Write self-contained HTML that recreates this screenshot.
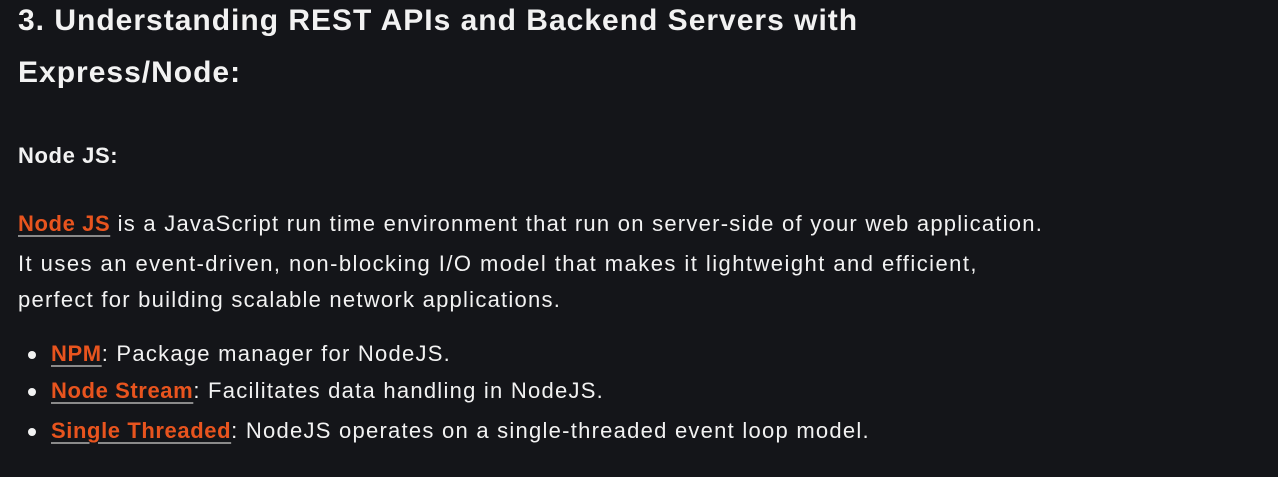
<!DOCTYPE html>
<html><head><style>
html,body{margin:0;padding:0;background:#141519;width:1278px;height:477px;overflow:hidden}
body{font-family:"Liberation Sans",sans-serif;color:#f2f2f2;position:relative}
.a{color:#e8541e;font-weight:bold;letter-spacing:0.6px;text-decoration:underline;text-decoration-color:#8a8a8a;text-underline-offset:4px;text-decoration-thickness:2px}
.l{position:absolute;left:18px;white-space:nowrap}
h1{margin:0;font-size:30px;letter-spacing:1px;font-weight:bold;position:absolute;left:18px;line-height:52px;width:1000px}
.p{font-size:22px;letter-spacing:1.25px}
.b{position:absolute;left:28px;width:8px;height:8px;border-radius:50%;background:#f2f2f2}
</style></head><body>
<h1 style="top:-5px">3. Understanding REST APIs and Backend Servers with<br>Express/Node:</h1>
<div class="l" style="top:143px;font-size:22px;letter-spacing:0.6px;font-weight:bold">Node JS:</div>
<div class="l p" style="top:211px"><span class="a">Node JS</span> is a JavaScript run time environment that run on server-side of your web application.</div>
<div class="l p" style="top:251px;letter-spacing:1.45px">It uses an event-driven, non-blocking I/O model that makes it lightweight and efficient,</div>
<div class="l p" style="top:287px">perfect for building scalable network applications.</div>
<div class="b" style="top:351px"></div>
<div class="l p" style="left:51px;top:341px"><span class="a">NPM</span>: Package manager for NodeJS.</div>
<div class="b" style="top:388px"></div>
<div class="l p" style="left:51px;top:378px"><span class="a">Node Stream</span>: Facilitates data handling in NodeJS.</div>
<div class="b" style="top:428px"></div>
<div class="l p" style="left:51px;top:418px"><span class="a">Single Threaded</span>: NodeJS operates on a single-threaded event loop model.</div>
</body></html>
